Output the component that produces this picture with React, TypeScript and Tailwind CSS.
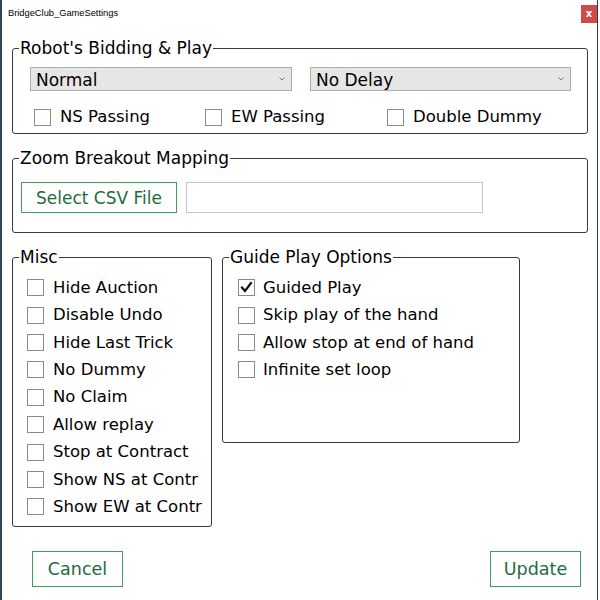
import React from "react";

const font = { fontFamily: '"DejaVu Sans", Verdana, sans-serif' };

function Box({ checked = false }: { checked?: boolean }) {
  return (
    <span className="flex h-[17px] w-[17px] shrink-0 items-center justify-center border border-[#8a8a8a] bg-white">
      {checked && (
        <svg width="13" height="13" viewBox="0 0 13 13">
          <path d="M2 6.5 L5 10 L11 2" fill="none" stroke="#111" strokeWidth="2.2" strokeLinecap="square" />
        </svg>
      )}
    </span>
  );
}

function Check({ label, checked = false, gap = "gap-[9px]" }: { label: string; checked?: boolean; gap?: string }) {
  return (
    <div className={`flex h-[27.4px] items-center ${gap}`}>
      <Box checked={checked} />
      <span className="mt-[1px] whitespace-nowrap text-[16.5px] text-black">{label}</span>
    </div>
  );
}

function Select({ value, w }: { value: string; w: string }) {
  return (
    <div className={`flex h-[24px] ${w} items-center justify-between border border-[#adadad] bg-[#e6e6e6] pl-[5px] pr-[6px]`}>
      <span className="mt-[2px] text-[17px] leading-none text-black">{value}</span>
      <svg width="6" height="4" viewBox="0 0 6 4">
        <path d="M0.5 0.5 L3 3 L5.5 0.5" fill="none" stroke="#777" strokeWidth="1" />
      </svg>
    </div>
  );
}

function Legend({ children }: { children: React.ReactNode }) {
  return <legend className="ml-[6px] px-[1px] text-[17px] leading-[20px] text-black">{children}</legend>;
}

export default function App() {
  const misc = [
    "Hide Auction",
    "Disable Undo",
    "Hide Last Trick",
    "No Dummy",
    "No Claim",
    "Allow replay",
    "Stop at Contract",
    "Show NS at Contr",
    "Show EW at Contr",
  ];
  return (
    <div className="h-[600px] w-[600px] bg-white" style={font}>
      <div className="flex h-full w-[598px] flex-col border-l-2 border-r border-l-[#2f4656] border-r-[#2b3b48]">
        <div className="flex h-[38px] items-start justify-between">
          <span
            className="ml-[6px] mt-[7px] text-[9.3px] leading-[12px] text-black"
            style={{ fontFamily: '"Liberation Sans", Arial, sans-serif' }}
          >
            BridgeClub_GameSettings
          </span>
          <div className="mt-[5px] flex h-[18px] w-[16px] items-center justify-center bg-[#d04a4a] text-[10px] font-bold leading-none text-white">
            x
          </div>
        </div>

        <div className="flex flex-col pl-[10px] pr-[9px]">
          <fieldset className="rounded-[3px] border border-[#3a3a3a] pb-[4px]">
            <Legend>Robot's Bidding &amp; Play</Legend>
            <div className="mt-[9px] flex gap-[18px] pl-[17px]">
              <Select value="Normal" w="w-[262px]" />
              <Select value="No Delay" w="w-[261px]" />
            </div>
            <div className="mt-[14px] flex h-[24px] items-center pl-[21px]">
              <div className="w-[171px]">
                <Check label="NS Passing" />
              </div>
              <div className="w-[182px]">
                <Check label="EW Passing" />
              </div>
              <Check label="Double Dummy" />
            </div>
          </fieldset>

          <fieldset className="mt-[14px] rounded-[3px] border border-[#3a3a3a] pb-[19px]">
            <Legend>Zoom Breakout Mapping</Legend>
            <div className="mt-[14px] flex gap-[9px] pl-[8px]">
              <button className="h-[31px] w-[156px] border border-[#3f9c5d] bg-white pt-[2px] text-[17px] text-[#1e6b3c]">
                Select CSV File
              </button>
              <div className="h-[31px] w-[297px] border border-[#c4c4c4] bg-white" />
            </div>
          </fieldset>

          <div className="mt-[14px] flex items-start gap-[10px]">
            <fieldset className="w-[200px] rounded-[3px] border border-[#3a3a3a] pb-[5px]">
              <Legend>Misc</Legend>
              <div className="flex flex-col pl-[14px] pt-[7px]">
                {misc.map((m) => (
                  <Check key={m} label={m} />
                ))}
              </div>
            </fieldset>
            <fieldset className="h-[196px] w-[298px] rounded-[3px] border border-[#3a3a3a]">
              <Legend>Guide Play Options</Legend>
              <div className="flex flex-col pl-[15px] pt-[7px]">
                <Check label="Guided Play" checked gap="gap-[8px]" />
                <Check label="Skip play of the hand" gap="gap-[8px]" />
                <Check label="Allow stop at end of hand" gap="gap-[8px]" />
                <Check label="Infinite set loop" gap="gap-[8px]" />
              </div>
            </fieldset>
          </div>

          <div className="mt-[24px] flex justify-between pl-[20px] pr-[7px]">
            <button className="h-[36px] w-[91px] border border-[#3f9c5d] bg-white pt-[2px] text-[17.5px] text-[#1e6b3c]">
              Cancel
            </button>
            <button className="h-[36px] w-[91px] border border-[#3f9c5d] bg-white pt-[2px] text-[17.5px] text-[#1e6b3c]">
              Update
            </button>
          </div>
        </div>
      </div>
    </div>
  );
}
